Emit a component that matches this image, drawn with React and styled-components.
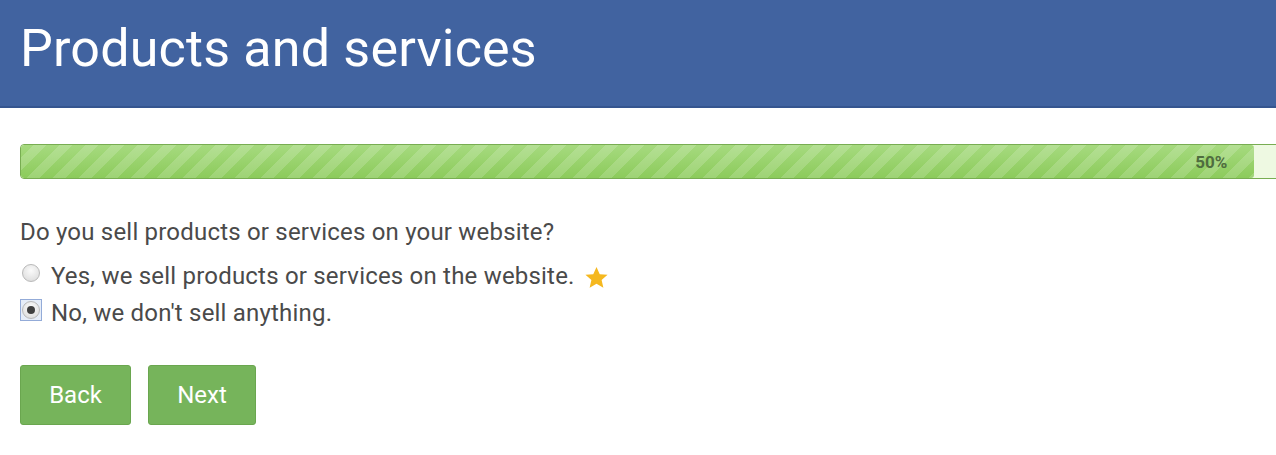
import React from 'react'
import styled, { createGlobalStyle } from 'styled-components'

const GlobalStyle = createGlobalStyle`
  html, body {
    margin: 0;
    padding: 0;
    background: #fff;
    overflow: hidden;
  }
  body {
    font-family: Roboto, 'Liberation Sans', sans-serif;
    color: #4a4a4a;
  }
`

const Header = styled.header`
  height: 108px;
  background: #4163a0;
  border-bottom: 2px solid #35558f;
  display: flex;
  align-items: center;
  padding: 0 20px 10px;
  box-sizing: border-box;
`

const Title = styled.h1`
  margin: 0;
  font-size: 52px;
  font-weight: 400;
  letter-spacing: 0.2px;
  color: #fff;
`

const Content = styled.main`
  padding: 36px 0 0 20px;
`

const Track = styled.div`
  width: calc(100% + 20px);
  height: 35px;
  box-sizing: border-box;
  border: 1px solid #78ad52;
  border-radius: 4px;
  background: #eef9e2;
  overflow: hidden;
`

const Fill = styled.div`
  height: 100%;
  border-radius: 3px;
  box-sizing: border-box;
  background-color: #95d166;
  background-image:
    linear-gradient(
      -45deg,
      rgba(255, 255, 255, 0.16) 25%,
      transparent 25%,
      transparent 50%,
      rgba(255, 255, 255, 0.16) 50%,
      rgba(255, 255, 255, 0.16) 75%,
      transparent 75%,
      transparent
    ),
    linear-gradient(to bottom, #a6da7f, #8ccb5b);
  background-size: 26px 26px, 100% 100%;
  display: flex;
  align-items: center;
  justify-content: flex-end;
  padding-right: 27px;
  font-size: 17px;
  font-weight: 700;
  color: #4f6d3f;
`

const Question = styled.p`
  margin: 39px 0 0;
  font-size: 24px;
  line-height: 28px;
  letter-spacing: 0.2px;
`

const Options = styled.div`
  display: flex;
  flex-direction: column;
  gap: 9px;
  margin-top: 16px;
`

const Option = styled.label`
  display: flex;
  align-items: center;
  gap: 9px;
  font-size: 24px;
  line-height: 28px;
  letter-spacing: 0.2px;
`

const RadioSlot = styled.span`
  display: flex;
  align-items: center;
  justify-content: center;
  width: 22px;
  height: 22px;
  box-sizing: border-box;
  margin-top: -6px;
  flex-shrink: 0;
  border: 1px solid ${({ focused }) => (focused ? '#93abd8' : 'transparent')};
  background: ${({ focused }) => (focused ? '#e6edf8' : 'transparent')};
`

const Radio = styled.span`
  width: 18px;
  height: 18px;
  border-radius: 50%;
  box-sizing: border-box;
  border: 1px solid #b9b9b9;
  background: radial-gradient(circle at 50% 35%, #fbfbfb 0%, #e2e2e2 70%, #d0d0d0 100%);
  display: flex;
  align-items: center;
  justify-content: center;
  ${({ checked }) =>
    checked &&
    `
    &::after {
      content: '';
      width: 8px;
      height: 8px;
      border-radius: 50%;
      background: #3f3f3f;
    }
  `}
`

const Star = styled.svg`
  margin-left: 0;
  margin-top: 2px;
`

const Actions = styled.div`
  display: flex;
  gap: 17px;
  margin-top: 38px;
`

const Button = styled.button`
  height: 60px;
  min-width: ${({ width }) => width}px;
  padding: 0 20px;
  border: 1px solid #6aa64f;
  border-radius: 3px;
  background: #76b45b;
  color: #fff;
  font-family: Roboto, 'Liberation Sans', sans-serif;
  font-size: 24px;
  cursor: pointer;
`

function App() {
  const progress = 96.8

  return (
    <>
      <GlobalStyle />
      <Header>
        <Title>Products and services</Title>
      </Header>
      <Content>
        <Track>
          <Fill style={{ width: `${progress}%` }}>50%</Fill>
        </Track>
        <Question>Do you sell products or services on your website?</Question>
        <Options>
          <Option>
            <RadioSlot>
              <Radio />
            </RadioSlot>
            Yes, we sell products or services on the website.
            <Star width="25" height="25" viewBox="0 0 24 24">
              <path
                d="M12 1.8l3.1 7 7.5.6-5.7 5 1.7 7.4L12 17.9l-6.6 3.9 1.7-7.4-5.7-5 7.5-.6z"
                fill="#f5b81f"
              />
            </Star>
          </Option>
          <Option>
            <RadioSlot focused>
              <Radio checked />
            </RadioSlot>
            No, we don't sell anything.
          </Option>
        </Options>
        <Actions>
          <Button width={111}>Back</Button>
          <Button width={108}>Next</Button>
        </Actions>
      </Content>
    </>
  )
}

export default App
